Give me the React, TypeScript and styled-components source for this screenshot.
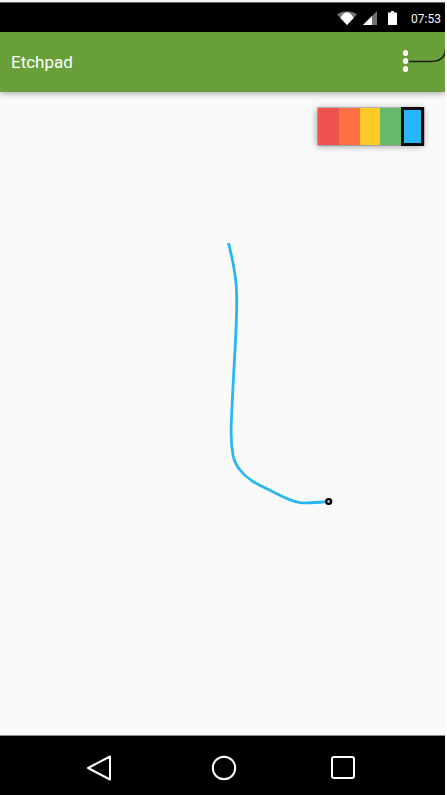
import React from "react";
import styled, { createGlobalStyle } from "styled-components";

const Global = createGlobalStyle`
  html, body { margin: 0; padding: 0; background: #ffffff; }
  body { font-family: Roboto, "Liberation Sans", sans-serif; }
`;

const Screen = styled.div`
  position: relative;
  width: 445px;
  height: 795px;
  display: flex;
  flex-direction: column;
  background: #fafafa;
  overflow: hidden;
  border-top: 2px solid #f4f4f4;
  box-sizing: border-box;
`;

const StatusBar = styled.div`
  height: 30px;
  flex: none;
  background: #000;
  border-top: 1px solid #6a6a6a;
  color: #fff;
  display: flex;
  align-items: center;
  justify-content: flex-end;
  padding-right: 4px;
  box-sizing: border-box;
`;

const StatusIcons = styled.div`
  display: flex;
  align-items: center;
  gap: 6px;
  margin-right: 14px;
`;

const Clock = styled.span`
  font-size: 12px;
  line-height: 14px;
  color: #f4f8ff;
  padding-top: 2px;
`;

const AppBar = styled.header`
  position: relative;
  z-index: 2;
  height: 60px;
  flex: none;
  background: #689f38;
  display: flex;
  align-items: center;
  justify-content: space-between;
  padding: 0 37px 0 11px;
  box-sizing: border-box;
  box-shadow: 0 2px 6px rgba(0, 0, 0, 0.3);
`;

const Title = styled.h1`
  margin: 0;
  font-size: 17px;
  font-weight: 400;
  color: #fff;
`;

const Overflow = styled.div`
  display: flex;
  flex-direction: column;
  gap: 2.5px;
  margin-top: -2px;
`;

const Dot = styled.span`
  width: 5.5px;
  height: 5.5px;
  border-radius: 50%;
  background: #fff;
`;

const Canvas = styled.main`
  flex: 1;
  min-height: 0;
  display: flex;
  justify-content: flex-end;
  align-items: flex-start;
  padding: 16px 21px 0 0;
`;

const Palette = styled.div`
  display: flex;
  height: 37px;
  box-shadow: 0 0 0 1px rgba(0, 0, 0, 0.18), -1px 1px 7px rgba(0, 0, 0, 0.4);
`;

const Swatch = styled.div<{ $color: string; $selected?: boolean }>`
  width: ${(p) => (p.$selected ? "23px" : "20.75px")};
  margin: ${(p) => (p.$selected ? "-1px 0 -1px 0" : "0")};
  background: ${(p) => p.$color};
  border: ${(p) => (p.$selected ? "3px solid #0a0a0a" : "none")};
  box-sizing: border-box;
`;

const NavBar = styled.nav`
  height: 60px;
  flex: none;
  background: #000;
  border-top: 1px solid #8a8a8a;
  box-sizing: border-box;
  display: grid;
  grid-template-columns: 125px 120px auto;
  align-items: center;
  padding: 4px 0 0 86px;
`;

const Overlay = styled.svg`
  position: absolute;
  left: 0;
  top: -2px;
  z-index: 3;
  pointer-events: none;
`;

const colors = ["#ef5350", "#ff7043", "#ffca28", "#66bb6a"];

export default function App() {
  return (
    <>
      <Global />
      <Screen>
        <StatusBar>
          <StatusIcons>
            <svg width="20" height="14" viewBox="0 0 20 14">
              <path d="M0 3.5C5.5-1 14.5-1 20 3.5L10 14Z" fill="#fff" fillOpacity="0.45" />
              <path d="M3.4 7C7-0.2 13 -0.2 16.6 7L10 14Z" fill="#fff" />
            </svg>
            <svg width="14" height="14" viewBox="0 0 14 14">
              <path d="M14 0V14H0Z" fill="#fff" fillOpacity="0.45" />
              <path d="M9 5V14H0Z" fill="#fff" />
            </svg>
            <svg width="9" height="14" viewBox="0 0 9 14" style={{ marginLeft: 5 }}>
              <path d="M3 0H6V1.5H9V14H0V1.5H3Z" fill="#fff" />
            </svg>
          </StatusIcons>
          <Clock>07:53</Clock>
        </StatusBar>
        <AppBar>
          <Title>Etchpad</Title>
          <Overflow>
            <Dot />
            <Dot />
            <Dot />
          </Overflow>
        </AppBar>
        <Canvas>
          <Palette>
            {colors.map((c) => (
              <Swatch key={c} $color={c} />
            ))}
            <Swatch $color="#29b6f6" $selected />
          </Palette>
        </Canvas>
        <NavBar>
          <svg width="26" height="28" viewBox="0 0 26 28">
            <path d="M24 2.5V25.5L2 14Z" fill="none" stroke="#fff" strokeWidth="2" strokeLinejoin="round" />
          </svg>
          <svg width="26" height="26" viewBox="0 0 26 26">
            <circle cx="13" cy="13" r="11.2" fill="none" stroke="#fff" strokeWidth="2" />
          </svg>
          <svg width="24" height="24" viewBox="0 0 24 24">
            <rect x="1" y="1" width="22" height="21" rx="2" fill="none" stroke="#fff" strokeWidth="2" />
          </svg>
        </NavBar>
        <Overlay width="447" height="795" viewBox="0 0 447 795">
          <path
            d="M228.5 243C231 253 234.5 268 236 283C237.5 298 236.8 315 235.5 340C234 365 232.5 395 231.3 423C230.8 433 231 445 233.3 456.7C235 463 237 466.5 240 470C243 474 247 477.5 251.7 480.7C257 484 262 486.5 268 489.3C279 494.5 289 501 300 502.7C307 503.6 320 502 328 501.7"
            fill="none"
            stroke="#29b6f6"
            strokeWidth="2.8"
          />
          <circle cx="328.7" cy="501.5" r="2.5" fill="#9fb6c4" stroke="#000" strokeWidth="2.2" />
          <path d="M409 61.5H430C440 61.5 445 57 445.5 50C446 48 446.5 47 447 46.5" fill="none" stroke="#1a1a1a" strokeWidth="1.5" />
        </Overlay>
      </Screen>
    </>
  );
}
